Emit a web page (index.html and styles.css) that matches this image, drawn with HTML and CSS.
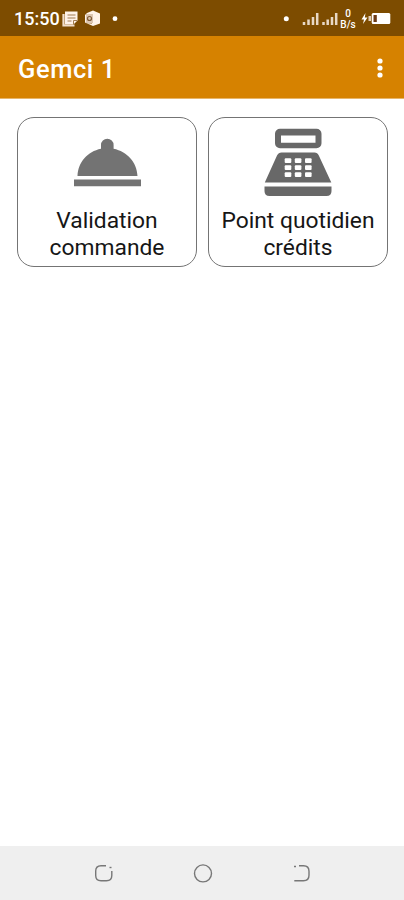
FILE: index.html
```html
<!DOCTYPE html>
<html lang="fr">
<head>
<meta charset="utf-8">
<title>Gemci 1</title>
<link rel="stylesheet" href="styles.css">
</head>
<body>
<div class="screen">
  <div class="status">
    <span class="clock">15:50</span>
    <svg class="notes" width="58" height="36" viewBox="60 0 58 36">
      <path d="M65 11.500h12.500v9l-4 4H65z" fill="#fff3e8"/>
      <path d="M63.500 14v11.500h11" fill="none" stroke="#f3dfcb" stroke-width="2.200"/>
      <path d="M67.500 15h8M67.500 18h8M67.500 21h4" stroke="#a27d50" stroke-width="1.100"/>
      <path d="M73.500 24.500v-4h4" fill="none" stroke="#a27d50"/>
      <path d="M87 13l6-2.500 7 3v10L93 26l-7-3 6 .500v-9.500l-3 1v6l-4 2v-8z" fill="#fff3e8"/>
      <path d="M86 14h7v9h-7z" fill="#dcc6b1"/>
      <circle cx="89.500" cy="18.500" r="2" fill="none" stroke="#805c36" stroke-width="1.200"/>
      <circle cx="115" cy="18.700" r="2.400" fill="#fff"/>
    </svg>
    <svg class="signals" width="60" height="36" viewBox="280 0 60 36">
      <circle cx="286.300" cy="18.700" r="2.500" fill="#fff"/>
      <path d="M304 22v3M308.500 19.500V25M313 17v8M317.200 13v12M323.500 22v3M327.700 19.500V25M332 17v8M336.200 13v12" stroke="#e8d8c6" stroke-width="2.500"/>
    </svg>
    <span class="rate"><span>0</span><span>B/s</span></span>
    <svg class="battery" width="34" height="36" viewBox="358 0 34 36">
      <path d="M365.500 13l-4 6.500h2.500l-1 4.500 4.500-6.500h-2.700z" fill="#fff"/>
      <rect x="368.500" y="16" width="2.500" height="5" fill="#e3cfbb"/>
      <rect x="371.700" y="13" width="18.600" height="11" rx="1.500" fill="#fff"/>
      <rect x="373.500" y="15" width="3.300" height="7" fill="#6d3b16"/>
    </svg>
  </div>
  <header class="appbar">
    <h1>Gemci 1</h1>
    <svg width="8" height="24" viewBox="0 0 8 24" fill="#fff"><circle cx="4" cy="5" r="2.600"/><circle cx="4" cy="12" r="2.600"/><circle cx="4" cy="19" r="2.600"/></svg>
  </header>
  <main class="grid">
    <button class="card">
      <svg width="70" height="70" viewBox="72 128 70 70" fill="#737373">
        <path d="M77.500 176c.600-14 10-24.500 23.500-27.300V145a6.300 6.300 0 0 1 12.600 0v3.700C127 151.500 136.900 162 137.500 176z"/>
        <path d="M74 179.600h67v6.600H74z"/>
      </svg>
      <span class="label">Validation<br>commande</span>
    </button>
    <button class="card">
      <svg width="70" height="70" viewBox="263 128 70 70" fill="#686868">
        <path fill-rule="evenodd" d="M280 128.800h36.500a5 5 0 0 1 5 5v9.500a5 5 0 0 1-5 5H280a5 5 0 0 1-5-5v-9.500a5 5 0 0 1 5-5zM281 135.500v7.300h34.500v-7.300z"/>
        <path d="M281.500 152.500h33q3 0 4.300 3L331.300 182.500H264.800L277 155.500q1.500-3 4.500-3z"/>
        <path d="M264.500 186.500h67v4.500q0 5-5 5h-57q-5 0-5-5z"/>
        <g fill="#fff">
          <rect x="284.700" y="158.300" width="6.600" height="4.700" rx="1"/><rect x="294.800" y="158.300" width="6.600" height="4.700" rx="1"/><rect x="305" y="158.300" width="6.600" height="4.700" rx="1"/>
          <rect x="284.700" y="165.300" width="6.600" height="4.700" rx="1"/><rect x="294.800" y="165.300" width="6.600" height="4.700" rx="1"/><rect x="305" y="165.300" width="6.600" height="4.700" rx="1"/>
          <rect x="284.700" y="172.300" width="6.600" height="4.700" rx="1"/><rect x="294.800" y="172.300" width="6.600" height="4.700" rx="1"/><rect x="305" y="172.300" width="6.600" height="4.700" rx="1"/>
        </g>
      </svg>
      <span class="label">Point quotidien<br>crédits</span>
    </button>
  </main>
  <nav class="nav">
    <svg width="20" height="20" viewBox="94 863 20 20"><path d="M106 865.700H101q-5.300 0-5.300 5.300v4.500q0 5.200 5.300 5.200h5.500q5.300 0 5.300-5.200V871"/><path d="M109.500 867.500h2"/></svg>
    <svg width="20" height="20" viewBox="192.500 863 20 20"><circle cx="202.500" cy="873.400" r="8.500"/></svg>
    <svg width="20" height="20" viewBox="291 863 20 20"><path d="M299 865.700h4.500q5.500 0 5.500 5.500v4q0 5.500-5.500 5.500H294.300"/><path d="M294 866.500h2"/></svg>
  </nav>
</div>
</body>
</html>
```
FILE: styles.css
```css
* { box-sizing: border-box; }
body { margin: 0; font-family: Roboto, "Liberation Sans", sans-serif; background: #fff; }
svg { display: block; flex: none; }
.screen { display: flex; flex-direction: column; height: 900px; }
.status { display: flex; height: 36px; padding-left: 14px; background: #7d4c00; color: #fff; }
.clock { width: 46px; padding-top: 1px; font-size: 18px; font-weight: 500; line-height: 36px; }
.signals { margin-left: 162px; }
.rate { display: flex; flex-direction: column; align-items: center; width: 16px; padding-top: 8px; font-size: 10px; font-weight: 500; line-height: 11px; }
.battery { margin-left: 2px; }
.appbar { display: flex; align-items: center; justify-content: space-between; height: 63px; padding: 2px 20px 0 18px; background: #d68200; border-bottom: 1px solid #e7b56a; color: #fff; }
.appbar h1 { margin: 0; padding-top: 2px; font-size: 25.5px; font-weight: 500; line-height: 30px; letter-spacing: 0.55px; }
.grid { display: grid; grid-template-columns: 180px 180px; gap: 11px; flex: 1; align-content: start; padding: 18px 17px; }
.card { display: flex; flex-direction: column; align-items: center; height: 150px; padding: 10px 0 0; border: 1px solid #747474; border-radius: 17px; background: #fff; color: #161616; font-family: inherit; }
.label { margin-top: 9px; font-size: 22.8px; line-height: 27px; text-align: center; white-space: nowrap; }
.nav { display: flex; align-items: center; justify-content: space-between; height: 54px; padding: 0 93px 0 94px; background: #efefef; }
.nav svg { fill: none; stroke: #777; stroke-width: 1.4; }
```
